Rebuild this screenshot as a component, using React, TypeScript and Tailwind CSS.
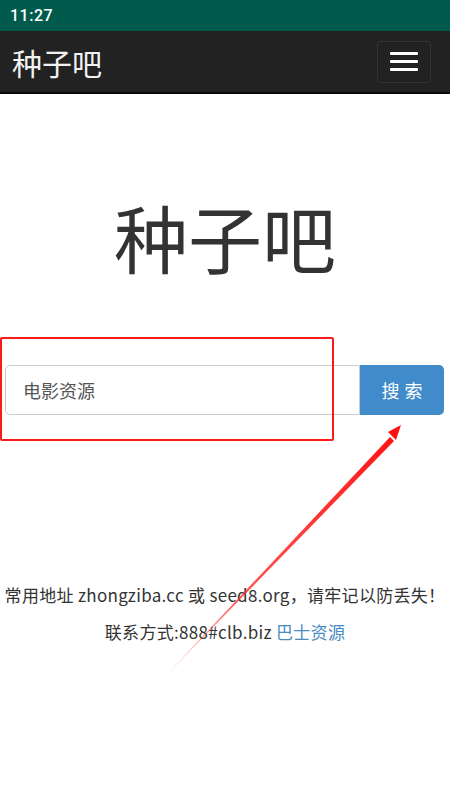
const cjk = '"Noto Sans CJK SC", "Noto Sans", Roboto, sans-serif'

function StatusBar() {
  return (
    <div className="h-[31px] bg-[#005b4c] flex items-center pl-[10px]">
      <span className="text-white text-[16px] font-medium tracking-[0.5px]" style={{ fontFamily: 'Roboto, sans-serif' }}>11:27</span>
    </div>
  )
}

function Navbar() {
  return (
    <div className="h-[63px] bg-[#222222] border-b-2 border-[#0a0a0a] flex items-center justify-between pl-[12px] pr-[19px]">
      <span className="text-[#f2f2f2] text-[30px] leading-none">种子吧</span>
      <button className="w-[54px] h-[42px] rounded-[4px] border border-[#333] flex flex-col items-center justify-center gap-[5px]">
        <span className="block w-[28px] h-[3px] rounded-[1px] bg-white" />
        <span className="block w-[28px] h-[3px] rounded-[1px] bg-white" />
        <span className="block w-[28px] h-[3px] rounded-[1px] bg-white" />
      </button>
    </div>
  )
}

export default function App() {
  return (
    <div className="relative w-[450px] h-[800px] bg-white overflow-hidden" style={{ fontFamily: cjk }}>
      <StatusBar />
      <Navbar />

      {/* Hero */}
      <div className="pt-[105px] flex justify-center">
        <h1 className="text-[74px] leading-none text-[#333] font-normal">种子吧</h1>
      </div>

      {/* Search */}
      <div className="mt-[92px] pl-[5px] pr-[6px] flex">
        <div className="flex-1 h-[50px] border border-[#ccc] rounded-l-[5px] flex items-center pl-[17px] text-[18px] text-[#555]">
          电影资源
        </div>
        <button className="w-[84px] h-[50px] bg-[#428bca] rounded-r-[5px] text-white text-[18px] tracking-[5px] pl-[5px]">
          搜索
        </button>
      </div>

      {/* Footer */}
      <div className="mt-[169px] text-center text-[#333] text-[17px] leading-[22px] tracking-[0.3px]">
        <p>常用地址 zhongziba.cc 或 seed8.org，请牢记以防丢失！</p>
        <p className="mt-[15px]">
          联系方式:888#clb.biz <a className="text-[#4a8cc0]">巴士资源</a>
        </p>
      </div>

      {/* annotation overlay */}
      <div className="absolute left-0 top-[337px] w-[334px] h-[104px] border-2 border-[#ff1a1a] rounded-[2px] pointer-events-none" />
      <svg className="absolute left-0 top-0 pointer-events-none" width="450" height="800">
        <defs>
          <linearGradient id="fade" x1="155" y1="687" x2="401" y2="425" gradientUnits="userSpaceOnUse">
            <stop offset="0" stopColor="#ff2a2a" stopOpacity="0" />
            <stop offset="0.35" stopColor="#ff2a2a" stopOpacity="0.8" />
            <stop offset="1" stopColor="#ff1010" stopOpacity="1" />
          </linearGradient>
        </defs>
        <polygon points="155,687 390,437 394,441" fill="url(#fade)" />
        <polygon points="401,425 388,432 396,440" fill="#ff1010" />
      </svg>
    </div>
  )
}
